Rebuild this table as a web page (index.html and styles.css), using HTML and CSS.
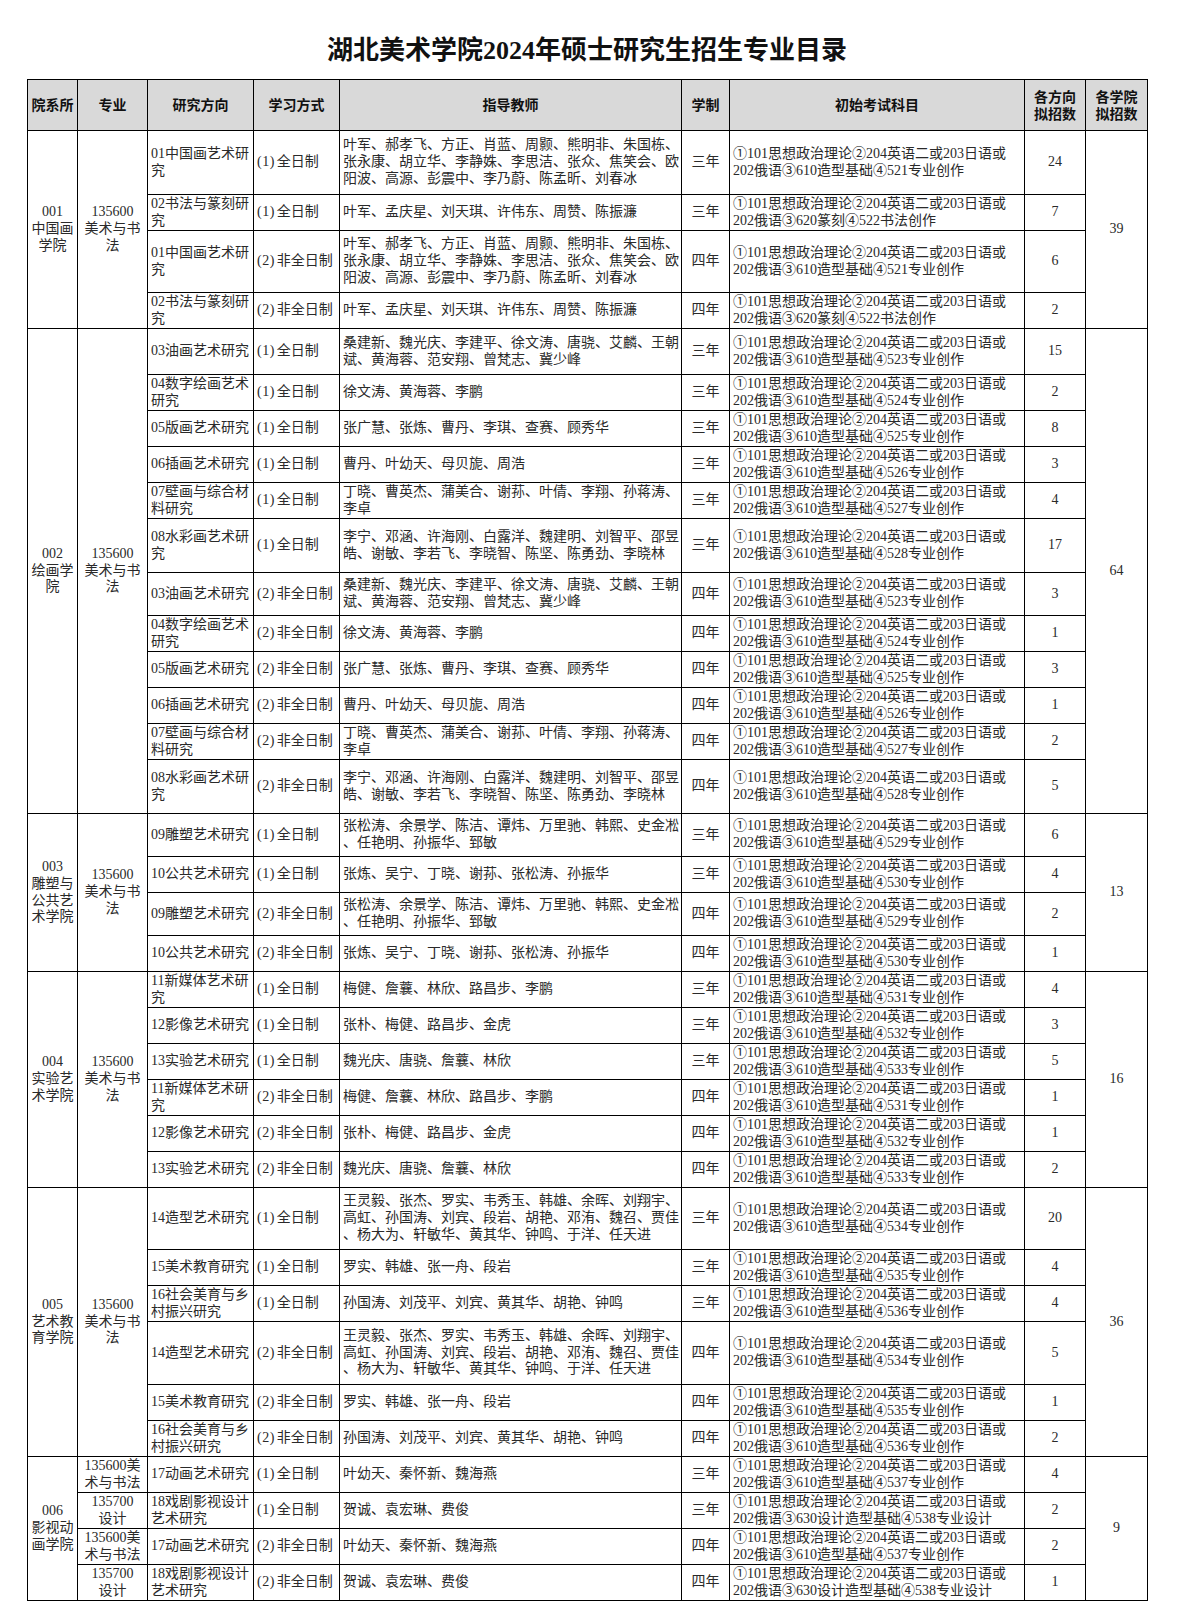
FILE: index.html
```html
<!DOCTYPE html>
<html lang="zh-CN">
<head>
<meta charset="utf-8">
<title>湖北美术学院2024年硕士研究生招生专业目录</title>
<link rel="stylesheet" href="styles.css">
</head>
<body>
<div class="page">
<h1 class="title">湖北美术学院2024年硕士研究生招生专业目录</h1>
<table class="cat">
<colgroup>
<col class="w1"><col class="w2"><col class="w3"><col class="w4"><col class="w5"><col class="w6"><col class="w7"><col class="w8"><col class="w9">
</colgroup>
<thead>
<tr class="hd">
<th>院系所</th><th>专业</th><th>研究方向</th><th>学习方式</th><th>指导教师</th><th>学制</th><th>初始考试科目</th><th>各方向<br>拟招数</th><th>各学院<br>拟招数</th>
</tr>
</thead>
<tbody>
<!-- 001 -->
<tr class="h64">
<td class="c" rowspan="4">001<br>中国画<br>学院</td>
<td class="c" rowspan="4">135600<br>美术与书<br>法</td>
<td class="l"><div>01中国画艺术研</div><div>究</div></td>
<td class="l"><span class="pm">(1)</span>全日制</td>
<td class="l"><div class="j">叶军、郝孝飞、方正、肖蓝、周颢、熊明非、朱国栋、</div><div class="j">张永康、胡立华、李静姝、李思洁、张众、焦笑会、欧</div><div>阳波、高源、彭震中、李乃蔚、陈孟昕、刘春冰</div></td>
<td class="c">三年</td>
<td class="l"><div>①101思想政治理论②204英语二或203日语或</div><div>202俄语③610造型基础④521专业创作</div></td>
<td class="c">24</td>
<td class="c" rowspan="4">39</td>
</tr>
<tr class="h36">
<td class="l"><div>02书法与篆刻研</div><div>究</div></td>
<td class="l"><span class="pm">(1)</span>全日制</td>
<td class="l">叶军、孟庆星、刘天琪、许伟东、周赞、陈振濂</td>
<td class="c">三年</td>
<td class="l"><div>①101思想政治理论②204英语二或203日语或</div><div>202俄语③620篆刻④522书法创作</div></td>
<td class="c">7</td>
</tr>
<tr class="h62">
<td class="l"><div>01中国画艺术研</div><div>究</div></td>
<td class="l"><span class="pm">(2)</span>非全日制</td>
<td class="l"><div class="j">叶军、郝孝飞、方正、肖蓝、周颢、熊明非、朱国栋、</div><div class="j">张永康、胡立华、李静姝、李思洁、张众、焦笑会、欧</div><div>阳波、高源、彭震中、李乃蔚、陈孟昕、刘春冰</div></td>
<td class="c">四年</td>
<td class="l"><div>①101思想政治理论②204英语二或203日语或</div><div>202俄语③610造型基础④521专业创作</div></td>
<td class="c">6</td>
</tr>
<tr class="h36">
<td class="l"><div>02书法与篆刻研</div><div>究</div></td>
<td class="l"><span class="pm">(2)</span>非全日制</td>
<td class="l">叶军、孟庆星、刘天琪、许伟东、周赞、陈振濂</td>
<td class="c">四年</td>
<td class="l"><div>①101思想政治理论②204英语二或203日语或</div><div>202俄语③620篆刻④522书法创作</div></td>
<td class="c">2</td>
</tr>
<!-- 002 -->
<tr class="h46">
<td class="c" rowspan="12">002<br>绘画学<br>院</td>
<td class="c" rowspan="12">135600<br>美术与书<br>法</td>
<td class="l">03油画艺术研究</td>
<td class="l"><span class="pm">(1)</span>全日制</td>
<td class="l"><div class="j">桑建新、魏光庆、李建平、徐文涛、唐骁、艾麟、王朝</div><div>斌、黄海蓉、范安翔、曾梵志、冀少峰</div></td>
<td class="c">三年</td>
<td class="l"><div>①101思想政治理论②204英语二或203日语或</div><div>202俄语③610造型基础④523专业创作</div></td>
<td class="c">15</td>
<td class="c" rowspan="12">64</td>
</tr>
<tr class="h36">
<td class="l"><div>04数字绘画艺术</div><div>研究</div></td>
<td class="l"><span class="pm">(1)</span>全日制</td>
<td class="l">徐文涛、黄海蓉、李鹏</td>
<td class="c">三年</td>
<td class="l"><div>①101思想政治理论②204英语二或203日语或</div><div>202俄语③610造型基础④524专业创作</div></td>
<td class="c">2</td>
</tr>
<tr class="h36">
<td class="l">05版画艺术研究</td>
<td class="l"><span class="pm">(1)</span>全日制</td>
<td class="l">张广慧、张炼、曹丹、李琪、查赛、顾秀华</td>
<td class="c">三年</td>
<td class="l"><div>①101思想政治理论②204英语二或203日语或</div><div>202俄语③610造型基础④525专业创作</div></td>
<td class="c">8</td>
</tr>
<tr class="h36">
<td class="l">06插画艺术研究</td>
<td class="l"><span class="pm">(1)</span>全日制</td>
<td class="l">曹丹、叶幼天、母贝旎、周浩</td>
<td class="c">三年</td>
<td class="l"><div>①101思想政治理论②204英语二或203日语或</div><div>202俄语③610造型基础④526专业创作</div></td>
<td class="c">3</td>
</tr>
<tr class="h36">
<td class="l"><div>07壁画与综合材</div><div>料研究</div></td>
<td class="l"><span class="pm">(1)</span>全日制</td>
<td class="l"><div class="j">丁晓、曹英杰、蒲美合、谢荪、叶倩、李翔、孙蒋涛、</div><div>李卓</div></td>
<td class="c">三年</td>
<td class="l"><div>①101思想政治理论②204英语二或203日语或</div><div>202俄语③610造型基础④527专业创作</div></td>
<td class="c">4</td>
</tr>
<tr class="h54">
<td class="l"><div>08水彩画艺术研</div><div>究</div></td>
<td class="l"><span class="pm">(1)</span>全日制</td>
<td class="l"><div class="j">李宁、邓涵、许海刚、白露洋、魏建明、刘智平、邵昱</div><div>皓、谢敏、李若飞、李晓智、陈坚、陈勇劲、李晓林</div></td>
<td class="c">三年</td>
<td class="l"><div>①101思想政治理论②204英语二或203日语或</div><div>202俄语③610造型基础④528专业创作</div></td>
<td class="c">17</td>
</tr>
<tr class="h43">
<td class="l">03油画艺术研究</td>
<td class="l"><span class="pm">(2)</span>非全日制</td>
<td class="l"><div class="j">桑建新、魏光庆、李建平、徐文涛、唐骁、艾麟、王朝</div><div>斌、黄海蓉、范安翔、曾梵志、冀少峰</div></td>
<td class="c">四年</td>
<td class="l"><div>①101思想政治理论②204英语二或203日语或</div><div>202俄语③610造型基础④523专业创作</div></td>
<td class="c">3</td>
</tr>
<tr class="h36">
<td class="l"><div>04数字绘画艺术</div><div>研究</div></td>
<td class="l"><span class="pm">(2)</span>非全日制</td>
<td class="l">徐文涛、黄海蓉、李鹏</td>
<td class="c">四年</td>
<td class="l"><div>①101思想政治理论②204英语二或203日语或</div><div>202俄语③610造型基础④524专业创作</div></td>
<td class="c">1</td>
</tr>
<tr class="h36">
<td class="l">05版画艺术研究</td>
<td class="l"><span class="pm">(2)</span>非全日制</td>
<td class="l">张广慧、张炼、曹丹、李琪、查赛、顾秀华</td>
<td class="c">四年</td>
<td class="l"><div>①101思想政治理论②204英语二或203日语或</div><div>202俄语③610造型基础④525专业创作</div></td>
<td class="c">3</td>
</tr>
<tr class="h36">
<td class="l">06插画艺术研究</td>
<td class="l"><span class="pm">(2)</span>非全日制</td>
<td class="l">曹丹、叶幼天、母贝旎、周浩</td>
<td class="c">四年</td>
<td class="l"><div>①101思想政治理论②204英语二或203日语或</div><div>202俄语③610造型基础④526专业创作</div></td>
<td class="c">1</td>
</tr>
<tr class="h36">
<td class="l"><div>07壁画与综合材</div><div>料研究</div></td>
<td class="l"><span class="pm">(2)</span>非全日制</td>
<td class="l"><div class="j">丁晓、曹英杰、蒲美合、谢荪、叶倩、李翔、孙蒋涛、</div><div>李卓</div></td>
<td class="c">四年</td>
<td class="l"><div>①101思想政治理论②204英语二或203日语或</div><div>202俄语③610造型基础④527专业创作</div></td>
<td class="c">2</td>
</tr>
<tr class="h54">
<td class="l"><div>08水彩画艺术研</div><div>究</div></td>
<td class="l"><span class="pm">(2)</span>非全日制</td>
<td class="l"><div class="j">李宁、邓涵、许海刚、白露洋、魏建明、刘智平、邵昱</div><div>皓、谢敏、李若飞、李晓智、陈坚、陈勇劲、李晓林</div></td>
<td class="c">四年</td>
<td class="l"><div>①101思想政治理论②204英语二或203日语或</div><div>202俄语③610造型基础④528专业创作</div></td>
<td class="c">5</td>
</tr>
<!-- 003 -->
<tr class="h43">
<td class="c" rowspan="4">003<br>雕塑与<br>公共艺<br>术学院</td>
<td class="c" rowspan="4">135600<br>美术与书<br>法</td>
<td class="l">09雕塑艺术研究</td>
<td class="l"><span class="pm">(1)</span>全日制</td>
<td class="l"><div class="j">张松涛、余景学、陈洁、谭炜、万里驰、韩熙、史金凇</div><div>、任艳明、孙振华、郅敏</div></td>
<td class="c">三年</td>
<td class="l"><div>①101思想政治理论②204英语二或203日语或</div><div>202俄语③610造型基础④529专业创作</div></td>
<td class="c">6</td>
<td class="c" rowspan="4">13</td>
</tr>
<tr class="h36">
<td class="l">10公共艺术研究</td>
<td class="l"><span class="pm">(1)</span>全日制</td>
<td class="l">张炼、吴宁、丁晓、谢荪、张松涛、孙振华</td>
<td class="c">三年</td>
<td class="l"><div>①101思想政治理论②204英语二或203日语或</div><div>202俄语③610造型基础④530专业创作</div></td>
<td class="c">4</td>
</tr>
<tr class="h43">
<td class="l">09雕塑艺术研究</td>
<td class="l"><span class="pm">(2)</span>非全日制</td>
<td class="l"><div class="j">张松涛、余景学、陈洁、谭炜、万里驰、韩熙、史金凇</div><div>、任艳明、孙振华、郅敏</div></td>
<td class="c">四年</td>
<td class="l"><div>①101思想政治理论②204英语二或203日语或</div><div>202俄语③610造型基础④529专业创作</div></td>
<td class="c">2</td>
</tr>
<tr class="h36">
<td class="l">10公共艺术研究</td>
<td class="l"><span class="pm">(2)</span>非全日制</td>
<td class="l">张炼、吴宁、丁晓、谢荪、张松涛、孙振华</td>
<td class="c">四年</td>
<td class="l"><div>①101思想政治理论②204英语二或203日语或</div><div>202俄语③610造型基础④530专业创作</div></td>
<td class="c">1</td>
</tr>
<!-- 004 -->
<tr class="h36">
<td class="c" rowspan="6">004<br>实验艺<br>术学院</td>
<td class="c" rowspan="6">135600<br>美术与书<br>法</td>
<td class="l"><div>11新媒体艺术研</div><div>究</div></td>
<td class="l"><span class="pm">(1)</span>全日制</td>
<td class="l">梅健、詹蘘、林欣、路昌步、李鹏</td>
<td class="c">三年</td>
<td class="l"><div>①101思想政治理论②204英语二或203日语或</div><div>202俄语③610造型基础④531专业创作</div></td>
<td class="c">4</td>
<td class="c" rowspan="6">16</td>
</tr>
<tr class="h36">
<td class="l">12影像艺术研究</td>
<td class="l"><span class="pm">(1)</span>全日制</td>
<td class="l">张朴、梅健、路昌步、金虎</td>
<td class="c">三年</td>
<td class="l"><div>①101思想政治理论②204英语二或203日语或</div><div>202俄语③610造型基础④532专业创作</div></td>
<td class="c">3</td>
</tr>
<tr class="h36">
<td class="l">13实验艺术研究</td>
<td class="l"><span class="pm">(1)</span>全日制</td>
<td class="l">魏光庆、唐骁、詹蘘、林欣</td>
<td class="c">三年</td>
<td class="l"><div>①101思想政治理论②204英语二或203日语或</div><div>202俄语③610造型基础④533专业创作</div></td>
<td class="c">5</td>
</tr>
<tr class="h36">
<td class="l"><div>11新媒体艺术研</div><div>究</div></td>
<td class="l"><span class="pm">(2)</span>非全日制</td>
<td class="l">梅健、詹蘘、林欣、路昌步、李鹏</td>
<td class="c">四年</td>
<td class="l"><div>①101思想政治理论②204英语二或203日语或</div><div>202俄语③610造型基础④531专业创作</div></td>
<td class="c">1</td>
</tr>
<tr class="h36">
<td class="l">12影像艺术研究</td>
<td class="l"><span class="pm">(2)</span>非全日制</td>
<td class="l">张朴、梅健、路昌步、金虎</td>
<td class="c">四年</td>
<td class="l"><div>①101思想政治理论②204英语二或203日语或</div><div>202俄语③610造型基础④532专业创作</div></td>
<td class="c">1</td>
</tr>
<tr class="h36">
<td class="l">13实验艺术研究</td>
<td class="l"><span class="pm">(2)</span>非全日制</td>
<td class="l">魏光庆、唐骁、詹蘘、林欣</td>
<td class="c">四年</td>
<td class="l"><div>①101思想政治理论②204英语二或203日语或</div><div>202俄语③610造型基础④533专业创作</div></td>
<td class="c">2</td>
</tr>
<!-- 005 -->
<tr class="h62">
<td class="c" rowspan="6">005<br>艺术教<br>育学院</td>
<td class="c" rowspan="6">135600<br>美术与书<br>法</td>
<td class="l">14造型艺术研究</td>
<td class="l"><span class="pm">(1)</span>全日制</td>
<td class="l"><div class="j">王灵毅、张杰、罗实、韦秀玉、韩雄、余晖、刘翔宇、</div><div class="j">高虹、孙国涛、刘宾、段岩、胡艳、邓洧、魏召、贾佳</div><div>、杨大为、轩敏华、黄其华、钟鸣、于洋、任天进</div></td>
<td class="c">三年</td>
<td class="l"><div>①101思想政治理论②204英语二或203日语或</div><div>202俄语③610造型基础④534专业创作</div></td>
<td class="c">20</td>
<td class="c" rowspan="6">36</td>
</tr>
<tr class="h36">
<td class="l">15美术教育研究</td>
<td class="l"><span class="pm">(1)</span>全日制</td>
<td class="l">罗实、韩雄、张一舟、段岩</td>
<td class="c">三年</td>
<td class="l"><div>①101思想政治理论②204英语二或203日语或</div><div>202俄语③610造型基础④535专业创作</div></td>
<td class="c">4</td>
</tr>
<tr class="h36">
<td class="l"><div>16社会美育与乡</div><div>村振兴研究</div></td>
<td class="l"><span class="pm">(1)</span>全日制</td>
<td class="l">孙国涛、刘茂平、刘宾、黄其华、胡艳、钟鸣</td>
<td class="c">三年</td>
<td class="l"><div>①101思想政治理论②204英语二或203日语或</div><div>202俄语③610造型基础④536专业创作</div></td>
<td class="c">4</td>
</tr>
<tr class="h63">
<td class="l">14造型艺术研究</td>
<td class="l"><span class="pm">(2)</span>非全日制</td>
<td class="l"><div class="j">王灵毅、张杰、罗实、韦秀玉、韩雄、余晖、刘翔宇、</div><div class="j">高虹、孙国涛、刘宾、段岩、胡艳、邓洧、魏召、贾佳</div><div>、杨大为、轩敏华、黄其华、钟鸣、于洋、任天进</div></td>
<td class="c">四年</td>
<td class="l"><div>①101思想政治理论②204英语二或203日语或</div><div>202俄语③610造型基础④534专业创作</div></td>
<td class="c">5</td>
</tr>
<tr class="h36">
<td class="l">15美术教育研究</td>
<td class="l"><span class="pm">(2)</span>非全日制</td>
<td class="l">罗实、韩雄、张一舟、段岩</td>
<td class="c">四年</td>
<td class="l"><div>①101思想政治理论②204英语二或203日语或</div><div>202俄语③610造型基础④535专业创作</div></td>
<td class="c">1</td>
</tr>
<tr class="h36">
<td class="l"><div>16社会美育与乡</div><div>村振兴研究</div></td>
<td class="l"><span class="pm">(2)</span>非全日制</td>
<td class="l">孙国涛、刘茂平、刘宾、黄其华、胡艳、钟鸣</td>
<td class="c">四年</td>
<td class="l"><div>①101思想政治理论②204英语二或203日语或</div><div>202俄语③610造型基础④536专业创作</div></td>
<td class="c">2</td>
</tr>
<!-- 006 -->
<tr class="h36">
<td class="c" rowspan="4">006<br>影视动<br>画学院</td>
<td class="c">135600美<br>术与书法</td>
<td class="l">17动画艺术研究</td>
<td class="l"><span class="pm">(1)</span>全日制</td>
<td class="l">叶幼天、秦怀新、魏海燕</td>
<td class="c">三年</td>
<td class="l"><div>①101思想政治理论②204英语二或203日语或</div><div>202俄语③610造型基础④537专业创作</div></td>
<td class="c">4</td>
<td class="c" rowspan="4">9</td>
</tr>
<tr class="h36">
<td class="c">135700<br>设计</td>
<td class="l"><div>18戏剧影视设计</div><div>艺术研究</div></td>
<td class="l"><span class="pm">(1)</span>全日制</td>
<td class="l">贺诚、袁宏琳、费俊</td>
<td class="c">三年</td>
<td class="l"><div>①101思想政治理论②204英语二或203日语或</div><div>202俄语③630设计造型基础④538专业设计</div></td>
<td class="c">2</td>
</tr>
<tr class="h36">
<td class="c">135600美<br>术与书法</td>
<td class="l">17动画艺术研究</td>
<td class="l"><span class="pm">(2)</span>非全日制</td>
<td class="l">叶幼天、秦怀新、魏海燕</td>
<td class="c">四年</td>
<td class="l"><div>①101思想政治理论②204英语二或203日语或</div><div>202俄语③610造型基础④537专业创作</div></td>
<td class="c">2</td>
</tr>
<tr class="h36">
<td class="c">135700<br>设计</td>
<td class="l"><div>18戏剧影视设计</div><div>艺术研究</div></td>
<td class="l"><span class="pm">(2)</span>非全日制</td>
<td class="l">贺诚、袁宏琳、费俊</td>
<td class="c">四年</td>
<td class="l"><div>①101思想政治理论②204英语二或203日语或</div><div>202俄语③630设计造型基础④538专业设计</div></td>
<td class="c">1</td>
</tr>
</tbody>
</table>
</div>
</body>
</html>
```

FILE: styles.css
```css
html, body {
  margin: 0;
  padding: 0;
  background: #ffffff;
}

.page {
  padding: 0 0 0 27px;
  width: 1120px;
}

.title {
  margin: 0 0 11px 0;
  padding-top: 34px;
  height: 34px;
  line-height: 34px;
  font-family: "Liberation Serif", "Noto Sans CJK SC", serif;
  font-weight: 700;
  font-size: 26px;
  text-align: center;
  color: #111111;
}

.cat {
  border-collapse: collapse;
  table-layout: fixed;
  width: 1120px;
  font-family: "Liberation Serif", "Noto Sans CJK SC", serif;
  font-size: 14px;
  line-height: 16.7px;
  color: #2a2a2a;
}

.w1 { width: 50px; }
.w2 { width: 70px; }
.w3 { width: 106px; }
.w4 { width: 86px; }
.w5 { width: 342px; }
.w6 { width: 48px; }
.w7 { width: 295px; }
.w8 { width: 61px; }
.w9 { width: 62px; }

.cat th,
.cat td {
  border: 1px solid #000000;
  padding: 0 3px;
  vertical-align: middle;
  white-space: nowrap;
  overflow: hidden;
}

.cat th {
  background: #d9d9d9;
  font-family: "Noto Sans CJK SC", sans-serif;
  font-weight: 700;
  font-size: 14px;
  line-height: 17.5px;
  color: #111111;
  text-align: center;
}

.hd { height: 51px; }
.h36 { height: 36px; }
.h43 { height: 43px; }
.h46 { height: 46px; }
.h54 { height: 54px; }
.h62 { height: 62px; }
.h63 { height: 63px; }
.h64 { height: 64px; }

.c {
  text-align: center;
}

.l {
  text-align: left;
}

.pm {
  letter-spacing: 0.5px;
  margin-right: 2px;
}

.j {
  text-align: justify;
  text-align-last: justify;
}
```
